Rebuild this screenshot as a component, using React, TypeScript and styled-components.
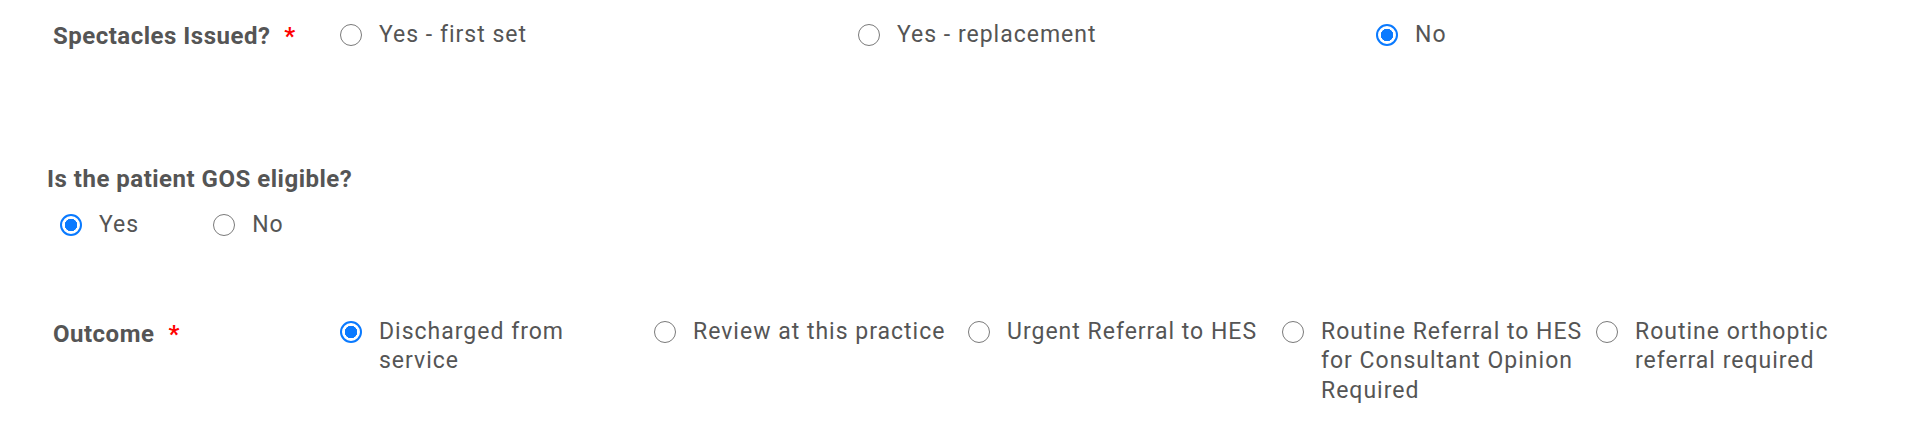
import React from "react";
import styled, { createGlobalStyle } from "styled-components";

const GlobalStyle = createGlobalStyle`
  body {
    margin: 0;
    background: #ffffff;
    font-family: Roboto, "Liberation Sans", Arial, sans-serif;
    color: #555555;
  }
`;

const Form = styled.div`
  width: 1922px;
  padding-top: 20px;
  box-sizing: border-box;
`;

const InlineField = styled.div<{ $top?: number }>`
  display: flex;
  align-items: flex-start;
  padding-left: 53px;
  margin-top: ${(p) => p.$top || 0}px;
`;

const InlineLabel = styled.div<{ $offset?: number }>`
  width: 287px;
  flex-shrink: 0;
  padding-top: ${(p) => p.$offset || 0}px;
  font-size: 24px;
  font-weight: 700;
  letter-spacing: 0.5px;
  line-height: 30px;
`;

const Required = styled.span`
  color: #ff0000;
  margin-left: 14px;
`;

const OptionGrid = styled.div<{ $cols: number; $colWidth: number }>`
  display: grid;
  grid-template-columns: repeat(${(p) => p.$cols}, ${(p) => p.$colWidth}px);
`;

const StackedField = styled.div<{ $top?: number }>`
  padding-left: 47px;
  margin-top: ${(p) => p.$top || 0}px;
`;

const StackedLabel = styled.div`
  font-size: 24px;
  font-weight: 700;
  letter-spacing: 0.5px;
  line-height: 30px;
`;

const InlineOptions = styled.div`
  display: flex;
  margin-top: 16px;
  padding-left: 13px;
`;

const Option = styled.label<{ $spacing?: number }>`
  display: flex;
  align-items: flex-start;
  gap: 17px;
  margin-right: ${(p) => p.$spacing || 0}px;
  cursor: pointer;
`;

const Radio = styled.span<{ $checked?: boolean }>`
  width: 22px;
  height: 22px;
  margin-top: 4px;
  flex-shrink: 0;
  box-sizing: border-box;
  border-radius: 50%;
  border: ${(p) => (p.$checked ? "2px solid #0a7aff" : "1.5px solid #7a7a7a")};
  background: ${(p) =>
    p.$checked ? "radial-gradient(circle, #0a7aff 0 6px, #ffffff 6.5px)" : "#ffffff"};
`;

const OptionText = styled.span<{ $maxWidth?: number }>`
  font-size: 23px;
  letter-spacing: 1px;
  line-height: 29.5px;
  max-width: ${(p) => (p.$maxWidth ? `${p.$maxWidth}px` : "none")};
`;

const spectacles = [
  { label: "Yes - first set", checked: false },
  { label: "Yes - replacement", checked: false },
  { label: "No", checked: true },
];

const outcomes = [
  { label: "Discharged from service", checked: true },
  { label: "Review at this practice", checked: false },
  { label: "Urgent Referral to HES", checked: false },
  { label: "Routine Referral to HES for Consultant Opinion Required", checked: false },
  { label: "Routine orthoptic referral required", checked: false },
];

function App() {
  return (
    <Form>
      <GlobalStyle />
      <InlineField>
        <InlineLabel $offset={1}>
          Spectacles Issued?<Required>*</Required>
        </InlineLabel>
        <OptionGrid $cols={3} $colWidth={518}>
          {spectacles.map((o, idx) => (
            <Option key={idx}>
              <Radio $checked={o.checked} />
              <OptionText>{o.label}</OptionText>
            </Option>
          ))}
        </OptionGrid>
      </InlineField>

      <StackedField $top={113}>
        <StackedLabel>Is the patient GOS eligible?</StackedLabel>
        <InlineOptions>
          <Option $spacing={74}>
            <Radio $checked />
            <OptionText>Yes</OptionText>
          </Option>
          <Option>
            <Radio />
            <OptionText>No</OptionText>
          </Option>
        </InlineOptions>
      </StackedField>

      <InlineField $top={77}>
        <InlineLabel $offset={2}>
          Outcome<Required>*</Required>
        </InlineLabel>
        <OptionGrid $cols={5} $colWidth={314}>
          {outcomes.map((o, idx) => (
            <Option key={idx}>
              <Radio $checked={o.checked} />
              <OptionText $maxWidth={266}>{o.label}</OptionText>
            </Option>
          ))}
        </OptionGrid>
      </InlineField>
    </Form>
  );
}

export default App;
